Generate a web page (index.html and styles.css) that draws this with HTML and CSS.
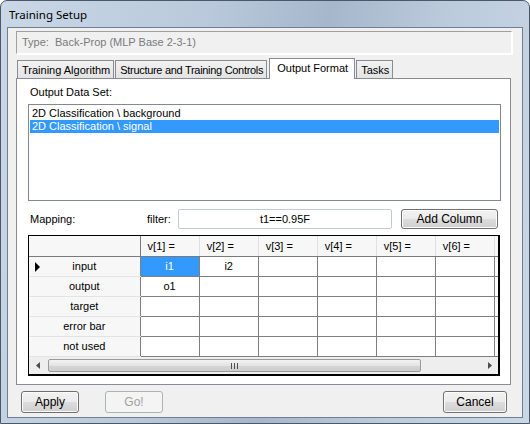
FILE: index.html
```html
<!DOCTYPE html>
<html lang="en">

<head>
    <meta charset="UTF-8" />
    <title>Training Setup</title>
    <link rel="stylesheet" href="styles.css">
</head>

<body>
    <div class="window">
        <div class="titlebar">Training Setup</div>

        <div class="client">
            <div class="type-box">Type:&nbsp; Back-Prop (MLP Base 2-3-1)</div>

            <div class="tabs">
                <div class="tab-strip">
                    <div class="tab">Training Algorithm</div>
                    <div class="tab tight">Structure and Training Controls</div>
                    <div class="tab active">Output Format</div>
                    <div class="tab">Tasks</div>
                </div>

                <div class="tab-panel">
                    <div class="field-label">Output Data Set:</div>
                    <div class="listbox">
                        <div class="list-item">2D Classification \ background</div>
                        <div class="list-item selected">2D Classification \ signal</div>
                    </div>

                    <div class="mapping-row">
                        <span class="mapping-label">Mapping:</span>
                        <span class="filter-label">filter:</span>
                        <div class="filter-input">t1==0.95F</div>
                        <button class="btn add-btn">Add Column</button>
                    </div>

                    <div class="grid">
                        <div class="grid-view">
                            <table class="map-table">
                                <colgroup>
                                    <col class="col-head">
                                    <col class="col-val">
                                    <col class="col-val">
                                    <col class="col-val">
                                    <col class="col-val">
                                    <col class="col-val">
                                    <col class="col-val">
                                    <col class="col-val">
                                </colgroup>
                                <thead>
                                    <tr>
                                        <th class="corner"></th>
                                        <th>v[1] =</th>
                                        <th>v[2] =</th>
                                        <th>v[3] =</th>
                                        <th>v[4] =</th>
                                        <th>v[5] =</th>
                                        <th>v[6] =</th>
                                        <th></th>
                                    </tr>
                                </thead>
                                <tbody>
                                    <tr>
                                        <td class="row-head current">input</td>
                                        <td class="sel">i1</td>
                                        <td>i2</td>
                                        <td></td><td></td><td></td><td></td><td></td>
                                    </tr>
                                    <tr>
                                        <td class="row-head">output</td>
                                        <td>o1</td>
                                        <td></td><td></td><td></td><td></td><td></td><td></td>
                                    </tr>
                                    <tr>
                                        <td class="row-head">target</td>
                                        <td></td><td></td><td></td><td></td><td></td><td></td><td></td>
                                    </tr>
                                    <tr>
                                        <td class="row-head">error bar</td>
                                        <td></td><td></td><td></td><td></td><td></td><td></td><td></td>
                                    </tr>
                                    <tr>
                                        <td class="row-head">not used</td>
                                        <td></td><td></td><td></td><td></td><td></td><td></td><td></td>
                                    </tr>
                                </tbody>
                            </table>
                        </div>
                        <div class="hscroll">
                            <div class="arrow">
                                <svg width="4" height="7" viewBox="0 0 4 7"><path d="M4 0 L0 3.5 L4 7 Z" fill="#4d4d4d"/></svg>
                            </div>
                            <div class="track">
                                <div class="thumb">
                                    <svg width="7" height="6" viewBox="0 0 7 6">
                                        <path d="M0.5 0 V6 M3.5 0 V6 M6.5 0 V6" stroke="#4d4d4d" stroke-width="1"/>
                                    </svg>
                                </div>
                            </div>
                            <div class="arrow">
                                <svg width="4" height="7" viewBox="0 0 4 7"><path d="M0 0 L4 3.5 L0 7 Z" fill="#4d4d4d"/></svg>
                            </div>
                        </div>
                    </div>
                </div>
            </div>

            <div class="footer">
                <button class="btn foot-btn">Apply</button>
                <button class="btn foot-btn" disabled>Go!</button>
                <div class="spacer"></div>
                <button class="btn foot-btn cancel-btn">Cancel</button>
            </div>
        </div>
    </div>
</body>

</html>
```

FILE: styles.css
```css
body {
    margin: 0;
    padding: 0;
    font-family: "Liberation Sans", Arial, sans-serif;
    font-size: 11px;
    color: #000;
    background: #fff;
}

.window {
    width: 530px;
    height: 424px;
    box-sizing: border-box;
    display: flex;
    flex-direction: column;
    border: 1px solid #4a5868;
    border-radius: 7px 7px 0 0;
    background: linear-gradient(100deg, #c9d7e6 0%, #b9c9db 35%, #a6b7cc 55%, #bccbdc 75%, #c9d7e6 100%);
    padding: 0 6px 5px 6px;
    overflow: hidden;
}

.titlebar {
    height: 26px;
    line-height: 28px;
    padding-left: 2px;
    font-family: "Noto Sans", "Open Sans", sans-serif;
    font-size: 11.5px;
    color: #000;
}

.client {
    flex: 1;
    display: flex;
    flex-direction: column;
    background: #f0f0f0;
    border: 1px solid #6f7f92;
    padding: 3px 9px 0 8px;
}

.type-box {
    height: 23px;
    box-sizing: border-box;
    border: 1px solid #a0a0a0;
    border-right-color: #fff;
    border-bottom-color: #fff;
    box-shadow: 1px 1px 0 #fff;
    color: #7a7a7a;
    line-height: 21px;
    padding-left: 5px;
    margin-right: 1px;
}

.tabs {
    margin-top: 4px;
    margin-right: 2px;
    display: flex;
    flex-direction: column;
}

.tab-strip {
    display: flex;
    align-items: flex-end;
    height: 20px;
    padding-left: 1px;
    position: relative;
    z-index: 1;
}

.tab {
    height: 18px;
    box-sizing: border-box;
    border: 1px solid #898c95;
    border-bottom: none;
    background: linear-gradient(#f2f2f2, #e3e3e3);
    padding: 0 3px 0 4px;
    line-height: 18px;
    margin-right: 1px;
}

.tab.tight {
    letter-spacing: -0.3px;
}

.tab.active {
    height: 21px;
    background: #fff;
    margin-bottom: -1px;
    padding: 0 6px 0 7px;
    line-height: 18px;
    margin-left: 1px;
}

.tab-panel {
    height: 307px;
    box-sizing: border-box;
    border: 1px solid #898c95;
    background: #fff;
    padding: 6px 9px 0 11px;
}

.field-label {
    line-height: 14px;
    height: 14px;
    padding-left: 2px;
}

.listbox {
    height: 97px;
    box-sizing: border-box;
    border: 1px solid #828790;
    margin-top: 5px;
    padding: 2px 1px 1px;
}

.list-item {
    height: 13px;
    line-height: 13px;
    padding-left: 2px;
}

.list-item.selected {
    background: #3399ff;
    color: #fff;
}

.mapping-row {
    display: flex;
    align-items: center;
    height: 20px;
    margin-top: 8px;
}

.mapping-label {
    width: 117px;
    padding-left: 2px;
}

.filter-label {
    width: 31px;
}

.filter-input {
    width: 214px;
    height: 20px;
    box-sizing: border-box;
    border: 1px solid #c4cad2;
    border-radius: 2px;
    text-align: center;
    line-height: 18px;
}

.btn {
    font-family: "Liberation Sans", Arial, sans-serif;
    font-size: 12px;
    color: #000;
    border: 1px solid #707070;
    border-radius: 3px;
    background: linear-gradient(#f2f2f2 0%, #ebebeb 50%, #dddddd 51%, #cfcfcf 100%);
    box-shadow: inset 0 0 0 1px #fcfcfc;
    padding: 0;
    cursor: pointer;
}

.btn:disabled {
    color: #a0a0a0;
    border-color: #adb2b5;
    background: #f4f4f4;
    box-shadow: none;
}

.add-btn {
    width: 97px;
    height: 20px;
    margin-left: 9px;
}

.grid {
    margin-top: 6px;
    width: 472px;
    height: 141px;
    box-sizing: border-box;
    border: 1px solid #000;
    border-right-width: 2px;
    border-bottom-width: 2px;
    display: flex;
    flex-direction: column;
    background: #fff;
}

.grid-view {
    height: 121px;
    overflow: hidden;
}

.map-table {
    border-collapse: collapse;
    table-layout: fixed;
    width: 525px;
}

.col-head {
    width: 111px;
}

.col-val {
    width: 59px;
}

.map-table th {
    height: 20px;
    box-sizing: border-box;
    background: #f7f7f7;
    font-weight: normal;
    text-align: left;
    padding: 0 0 0 7px;
    border-right: 1px solid #e0e0e0;
    border-bottom: 1px solid #7a7a7a;
}

.map-table th.corner {
    border-right: 1px solid #7a7a7a;
}

.map-table td {
    height: 20px;
    box-sizing: border-box;
    padding: 0;
    text-align: center;
    border: 1px solid #7f7f7f;
}

.map-table td.row-head {
    background: #f7f7f7;
    border-top: 1px solid #e3e3e3;
    border-bottom: 1px solid #e3e3e3;
    border-left: none;
    position: relative;
}

.map-table tr:first-child td.row-head {
    border-top: 1px solid #7a7a7a;
}

.map-table td.current::before {
    content: "";
    position: absolute;
    left: 6px;
    top: 5px;
    border-left: 5px solid #000;
    border-top: 5px solid transparent;
    border-bottom: 5px solid transparent;
}

.map-table td.sel {
    background: #3399ff;
    color: #fff;
}

.hscroll {
    flex: 1;
    display: flex;
    align-items: center;
    background: #eeeeee;
    padding: 0 1px;
}

.arrow {
    width: 15px;
    display: flex;
    justify-content: center;
}

.track {
    flex: 1;
    height: 100%;
    padding: 2px 0;
    box-sizing: border-box;
}

.thumb {
    width: 373px;
    height: 100%;
    box-sizing: border-box;
    margin-left: 3px;
    border: 1px solid #9a9a9a;
    border-radius: 2px;
    background: linear-gradient(#f3f3f3, #e4e4e4 50%, #d6d6d6 51%, #cecece);
    display: flex;
    align-items: center;
    justify-content: center;
}

.footer {
    display: flex;
    align-items: center;
    height: 22px;
    margin-top: 6px;
    padding-left: 5px;
    padding-right: 6px;
}

.foot-btn {
    width: 58px;
    height: 22px;
    margin-right: 26px;
}

.spacer {
    flex: 1;
}

.cancel-btn {
    width: 64px;
    margin-right: 0;
}
```
